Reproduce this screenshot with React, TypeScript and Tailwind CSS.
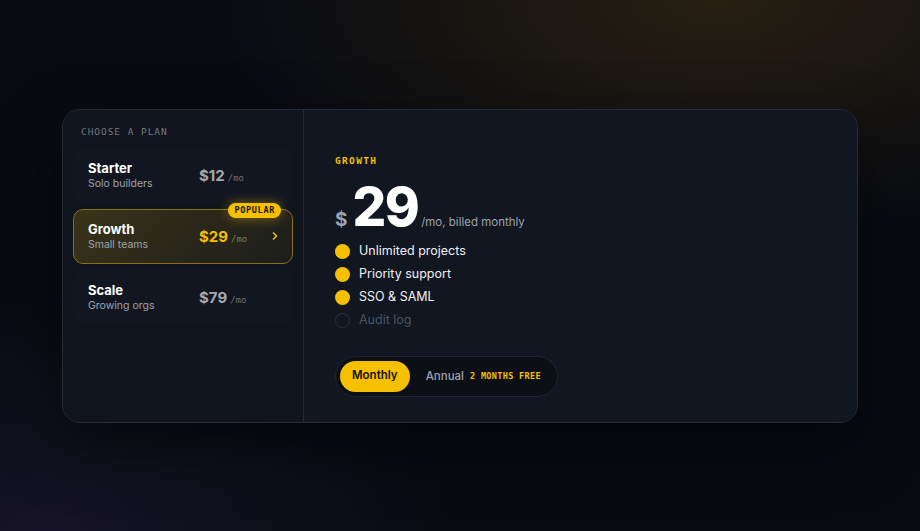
import React from "react";

const plans = [
  { name: "Starter", sub: "Solo builders", price: "$12", selected: false },
  { name: "Growth", sub: "Small teams", price: "$29", selected: true },
  { name: "Scale", sub: "Growing orgs", price: "$79", selected: false },
];

const features = [
  { label: "Unlimited projects", on: true },
  { label: "Priority support", on: true },
  { label: "SSO & SAML", on: true },
  { label: "Audit log", on: false },
];

const mono = "font-['DejaVu_Sans_Mono','Liberation_Mono',monospace]";

export default function App() {
  return (
    <div className="relative w-full h-[531px] overflow-hidden bg-[#080b12] bg-[radial-gradient(ellipse_55%_45%_at_78%_0%,rgba(150,100,15,0.22),transparent_100%),radial-gradient(ellipse_45%_45%_at_5%_100%,rgba(70,50,110,0.22),transparent_100%)] flex items-center justify-center font-['Inter','Noto_Sans',sans-serif]">
      <div className="w-[796px] h-[314px] rounded-[18px] border border-[#262b36] bg-[#11151e] shadow-[0_24px_60px_rgba(0,0,0,0.55)] flex overflow-hidden">
        {/* Left */}
        <div className="w-[241px] shrink-0 border-r border-[#232834] bg-[#10141d] px-[10px] pt-[16px]">
          <div className={`${mono} text-[9.5px] tracking-[0.1em] text-[#737985] pl-[8px] leading-[12px]`}>
            CHOOSE A PLAN
          </div>
          <div className="mt-[10px] flex flex-col gap-[6px]">
            {plans.map((p) => (
              <div
                key={p.name}
                className={`relative h-[55px] rounded-[10px] border flex items-center pl-[14px] pr-[13px] ${
                  p.selected
                    ? "border-[#8a6f14] bg-[linear-gradient(135deg,rgba(245,192,0,0.18),rgba(245,192,0,0.05))]"
                    : "border-transparent bg-[#121620]"
                }`}
              >
                {p.selected && (
                  <div className={`absolute -top-[7px] right-[11px] h-[15px] px-[6px] rounded-full bg-[#f5c000] text-[#1a1400] ${mono} text-[8.5px] font-bold tracking-[0.08em] flex items-center shadow-[0_0_12px_rgba(245,192,0,0.45)]`}>
                    POPULAR
                  </div>
                )}
                <div className="w-[111px] shrink-0">
                  <div className="text-[13px] font-bold text-white leading-[16px]">{p.name}</div>
                  <div className="text-[10.5px] text-[#9ca3af] leading-[14px] mt-[1px]">{p.sub}</div>
                </div>
                <div className="flex items-baseline gap-[3px] mt-[2px]">
                  <span className={`text-[15px] font-bold ${p.selected ? "text-[#f5c000]" : "text-[#a3a8b3]"}`}>
                    {p.price}
                  </span>
                  <span className={`${mono} text-[9px] ${p.selected ? "text-[#8a7a40]" : "text-[#6b7280]"}`}>/mo</span>
                </div>
                {p.selected && (
                  <svg className="ml-auto" width="8" height="10" viewBox="0 0 8 10" fill="none">
                    <path d="M2.5 2l3 3-3 3" stroke="#f5c000" strokeWidth="1.6" strokeLinecap="round" strokeLinejoin="round" />
                  </svg>
                )}
              </div>
            ))}
          </div>
        </div>

        {/* Right */}
        <div className="flex-1 bg-[#121620] pl-[31px] pt-[45px]">
          <div className={`${mono} text-[9.5px] font-bold tracking-[0.14em] text-[#f5c000] leading-[12px]`}>GROWTH</div>
          <div className="mt-[12px] flex items-baseline h-[56px]">
            <span className="text-[19px] font-bold text-[#9ca3af] mr-[5px]">$</span>
            <span className="text-[53px] font-extrabold text-white tracking-[-0.03em] leading-[56px]">29</span>
            <span className="text-[11.5px] text-[#9ca3af] ml-[3px]">/mo, billed monthly</span>
          </div>
          <div className="mt-[5px] flex flex-col">
            {features.map((f) => (
              <div key={f.label} className="h-[23px] flex items-center gap-[9px]">
                <span
                  className={`w-[15px] h-[15px] rounded-full ${
                    f.on ? "bg-[#f5c000]" : "border border-[#2a303c]"
                  }`}
                />
                <span className={`text-[12.5px] ${f.on ? "text-[#eef0f3]" : "text-[#4b5260]"}`}>{f.label}</span>
              </div>
            ))}
          </div>
          <div className="mt-[24px] inline-flex items-center h-[41px] rounded-full border border-[#1f2430] bg-[#0c0f16] p-[4px] pr-[16px]">
            <div className="h-[31px] px-[12px] rounded-full bg-[#f5c000] text-[#14110a] text-[11.5px] font-semibold flex items-center">
              Monthly
            </div>
            <div className="ml-[16px] h-[31px] flex items-center text-[11.5px] font-medium text-[#9ca3af] pt-[1px]">Annual</div>
            <div className={`ml-[6px] h-[31px] flex items-center ${mono} text-[8.5px] font-bold tracking-[0.04em] text-[#f5c000]`}>2 MONTHS FREE</div>
          </div>
        </div>
      </div>
    </div>
  );
}
